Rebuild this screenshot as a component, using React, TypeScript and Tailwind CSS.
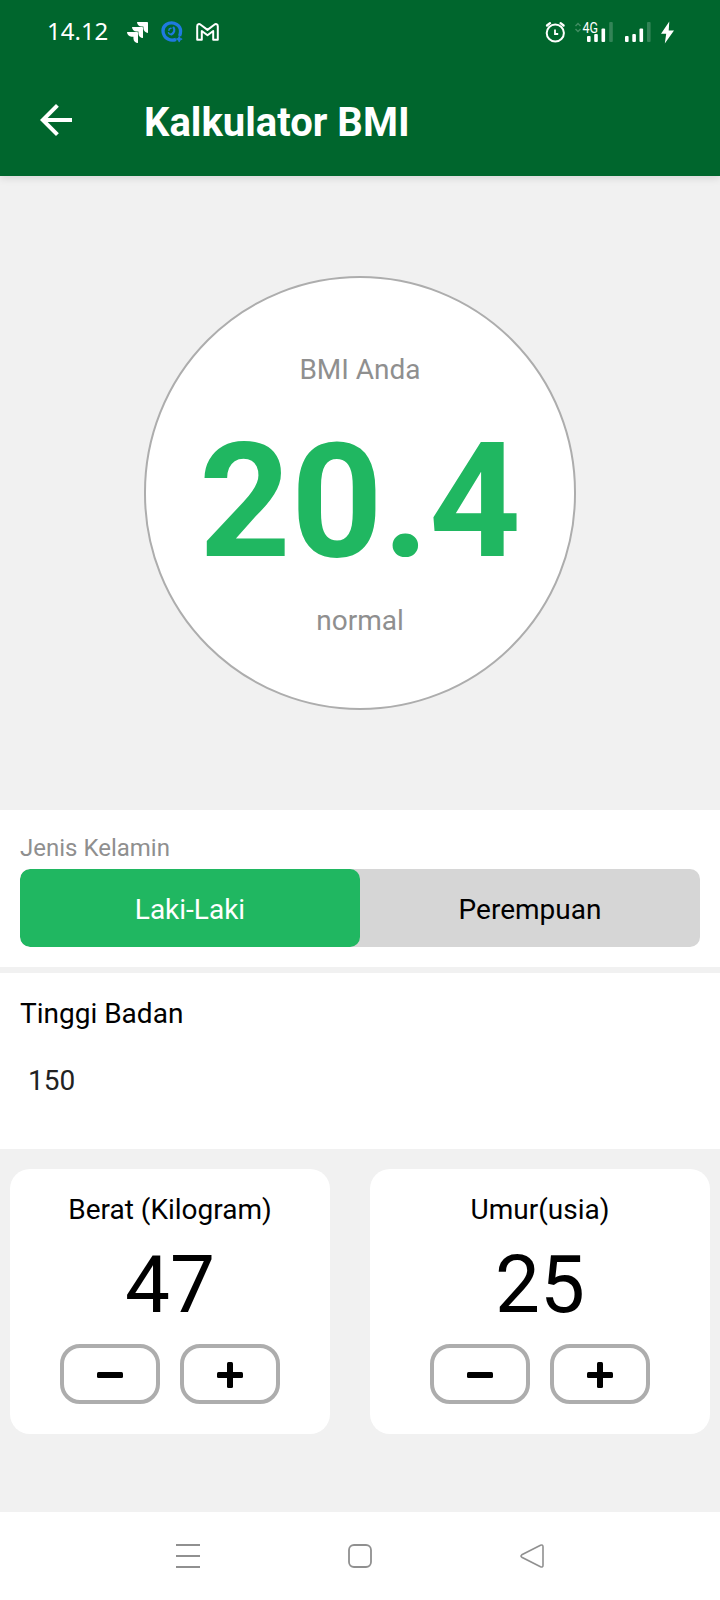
import { useState } from "react";
import { MdArrowBack } from "react-icons/md";

function NotificationIcons() {
  return (
    <div className="flex items-center">
      <svg className="w-[21px] h-[21px]" viewBox="0 0 24 24" fill="#fff">
        <path d="M11.571 11.513H0a5.218 5.218 0 0 0 5.232 5.215h2.13v2.057A5.215 5.215 0 0 0 12.575 24V12.518a1.005 1.005 0 0 0-1.005-1.005zm5.723-5.756H5.736a5.215 5.215 0 0 0 5.215 5.214h2.129v2.058a5.218 5.218 0 0 0 5.215 5.214V6.758a1.001 1.001 0 0 0-1.001-1.001zM23.013 0H11.455a5.215 5.215 0 0 0 5.215 5.215h2.129v2.057A5.215 5.215 0 0 0 24 12.483V1.005A1.001 1.001 0 0 0 23.013 0Z" />
      </svg>
      <svg className="w-[22px] h-[22px] ml-[13px]" viewBox="0 0 22 22" fill="none" stroke="#1f7ae0">
        <path d="M18.6 15C20.6 9.5 19 5.4 15.6 3.3 12.6 1.5 8.2 1.6 5.4 3.4 2.4 5.6 1.4 9.6 2.7 13.2 4.4 18 9.6 20.4 15 18.4" strokeWidth="3.3" />
        <path d="M12.600 6.600c1.600 2.400.6 5.400-2.200 6.800" strokeWidth="2.200" strokeLinecap="round" />
        <path d="M7.500 11.800c.5 1.300 1.400 1.700 2.400 1.500M10 7.300l-1.600.5-.5 1.500" strokeWidth="1.500" strokeLinecap="round" />
        <path d="M18.200 15.200l1 2.100 2 .8-2 .9-1 2.100-1-2.100-2-.9 2-.8z" fill="#1f7ae0" strokeWidth=".8" />
      </svg>
      <svg className="w-[23px] h-[18px] ml-[13px]" viewBox="0 0 23 18" fill="none" stroke="#fff" strokeWidth="2" strokeLinejoin="round">
        <path d="M1.200 3.200C1.200 1 3.200.6 4.700 1.700L11.500 6.900 18.300 1.700C19.800.6 21.800 1 21.800 3.200V16.700H17.200V8L11.500 12.200 5.800 8V16.700H1.200Z" />
      </svg>
    </div>
  );
}

function SignalIcons() {
  return (
    <svg className="w-[134px] h-[26px]" viewBox="544 19 134 26" fill="#fff">
      <g fill="none" stroke="#fff" strokeWidth="2" strokeLinecap="round">
        <circle cx="555.300" cy="33" r="8.600" />
        <path d="M547 25.500l3-2.400M563.600 25.500l-3-2.400" strokeWidth="2.300" />
        <path d="M555 29.500V34h3.200" strokeWidth="1.800" strokeLinecap="butt" />
      </g>
      <path d="M575.500 26l2.500-2.600 2.500 2.600M575.500 29l2.500 2.600 2.500-2.600" fill="none" stroke="#fff" strokeOpacity=".25" strokeWidth="1.400" />
      <text x="582.500" y="33" textLength="15.500" lengthAdjust="spacingAndGlyphs" className="font-[Roboto] text-[14px] font-normal">4G</text>
      <rect x="587" y="36" width="3.600" height="6" rx="1" />
      <rect x="594.200" y="34" width="3.600" height="8" rx="1" />
      <rect x="601.500" y="28.500" width="3.600" height="13.500" rx="1" />
      <rect x="609.200" y="22" width="3.600" height="20" rx="1" fillOpacity=".2" />
      <rect x="625" y="36" width="3.600" height="6" rx="1" />
      <rect x="632.300" y="34" width="3.600" height="8" rx="1" />
      <rect x="639.500" y="28.500" width="3.600" height="13.500" rx="1" />
      <rect x="647" y="22" width="3.600" height="20" rx="1" fillOpacity=".2" />
      <path d="M669.300 21.500 661 33.800h5.200L664.800 43.500 674 30.500h-5.300z" />
    </svg>
  );
}

function Stepper({ label, start, className }: { label: string; start: number; className: string }) {
  const [value, setValue] = useState(start);
  const button = "flex items-center justify-center w-[100px] h-[60px] pt-px rounded-[20px] border-4 border-[#adadad]";

  return (
    <div className={`flex flex-col items-center h-[265px] pt-[21px] bg-white rounded-[20px] text-black ${className}`}>
      <p className="text-[28px] leading-[40px]">{label}</p>
      <p className="text-[80px] leading-[110px] mb-1">{value}</p>
      <div className="flex gap-5">
        <button className={button} onClick={() => setValue(value - 1)}>
          <svg className="w-[26px] h-[26px]" viewBox="0 0 26 26">
            <rect y="10" width="26" height="6" rx="1.500" />
          </svg>
        </button>
        <button className={button} onClick={() => setValue(value + 1)}>
          <svg className="w-[26px] h-[26px]" viewBox="0 0 26 26">
            <rect y="10" width="26" height="6" rx="1.500" />
            <rect x="10" width="6" height="26" rx="1.500" />
          </svg>
        </button>
      </div>
    </div>
  );
}

export default function App() {
  const [gender, setGender] = useState("Laki-Laki");

  return (
    <div className="flex flex-col w-[720px] h-[1600px] bg-[#f1f1f1] font-[Roboto,sans-serif] text-black">
      <header className="h-[176px] shrink-0 bg-[#00662d] text-white shadow-[0_2px_8px_rgba(0,0,0,0.12)]">
        <div className="flex items-center justify-between h-16 pl-[47px] pr-[42px]">
          <div className="flex items-center">
            <span className="w-[80px] pb-0.5 text-[24px] leading-[30px] font-['Noto_Sans',sans-serif]">14.12</span>
            <NotificationIcons />
          </div>
          <SignalIcons />
        </div>
        <div className="flex items-center h-28 pl-8">
          <MdArrowBack className="w-12 h-12" />
          <h1 className="ml-16 mt-1.5 text-[40px] leading-[48px] font-bold">Kalkulator BMI</h1>
        </div>
      </header>

      <section className="flex justify-center h-[634px] shrink-0 pt-[100px]">
        <div className="flex flex-col items-center w-[432px] h-[434px] pt-[73px] bg-white rounded-full border-2 border-[#adadad] text-[28px] leading-[38px] text-[#8f8f8f]">
          <p>BMI Anda</p>
          <p className="mt-3 text-[160px] leading-[202px] font-bold text-[#20b761]">20.4</p>
          <p className="-mt-px">normal</p>
        </div>
      </section>

      <section className="h-[157px] shrink-0 px-5 pt-5 bg-white">
        <p className="mb-[3px] text-[24px] leading-[36px] text-[#8f8f8f]">Jenis Kelamin</p>
        <div className="flex h-[78px] rounded-[10px] bg-[#d6d6d6] overflow-hidden">
          {["Laki-Laki", "Perempuan"].map((item) => (
            <button
              key={item}
              onClick={() => setGender(item)}
              className={`flex-1 pt-1 rounded-[10px] text-[28px] ${gender === item ? "bg-[#20b761] text-white" : "text-black"}`}
            >
              {item}
            </button>
          ))}
        </div>
      </section>

      <section className="h-[176px] shrink-0 mt-1.5 px-5 pt-[21px] bg-white text-[28px] leading-[40px]">
        <p>Tinggi Badan</p>
        <p className="mt-[27px] pl-2 text-[#222222]">150</p>
      </section>

      <section className="flex justify-between px-2.5 pt-5">
        <Stepper label="Berat (Kilogram)" start={47} className="w-[320px]" />
        <Stepper label="Umur(usia)" start={25} className="w-[340px]" />
      </section>

      <nav className="flex items-center justify-between h-[88px] mt-auto px-[176px] bg-white">
        <svg className="w-6 h-6" viewBox="0 0 24 24" stroke="#909090" strokeWidth="2">
          <path d="M0 1h24M0 12h24M0 23h24" />
        </svg>
        <svg className="w-6 h-6" viewBox="0 0 24 24" fill="none" stroke="#909090" strokeWidth="1.800">
          <rect x="1" y="1" width="22" height="22" rx="5" />
        </svg>
        <svg className="w-6 h-6" viewBox="0 0 24 24" fill="none" stroke="#909090" strokeWidth="1.600">
          <path d="M1.800 10.800 20.500 1.300Q23 .3 23 2.800V21.200Q23 23.700 20.500 22.700L1.800 13.200Q.2 12 1.800 10.800Z" />
        </svg>
      </nav>
    </div>
  );
}
